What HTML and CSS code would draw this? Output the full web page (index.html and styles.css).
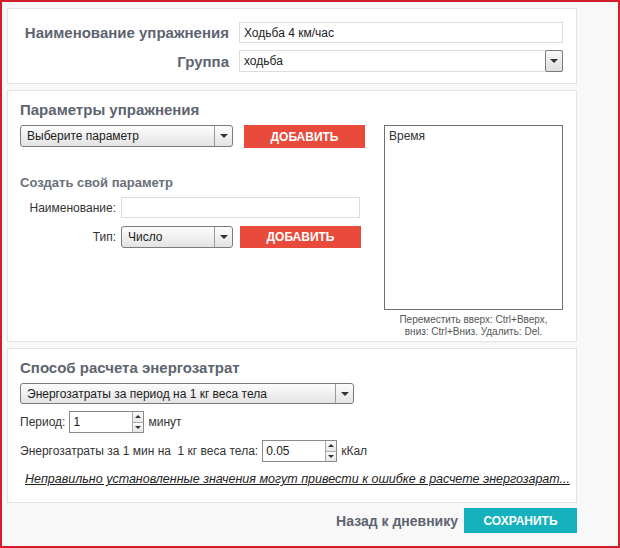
FILE: index.html
```html
<!DOCTYPE html>
<html lang="ru">
<head>
    <meta charset="UTF-8">
    <title>Упражнение</title>
    <link rel="stylesheet" href="styles.css">
</head>
<body>
<div class="frame">
    <div class="panel panel-main">
        <div class="main-row">
            <label class="big-label">Наименование упражнения</label>
            <input class="text-input" type="text" value="Ходьба 4 км/час">
        </div>
        <div class="main-row">
            <label class="big-label">Группа</label>
            <div class="flat-select">
                <span>ходьба</span>
                <span class="flat-arrow"><i class="tri"></i></span>
            </div>
        </div>
    </div>

    <div class="panel panel-params">
        <h2 class="panel-title">Параметры упражнения</h2>
        <div class="params-body">
            <div class="params-left">
                <div class="pick-row">
                    <div class="select select-param">
                        <span>Выберите параметр</span>
                        <span class="arrow"><i class="tri"></i></span>
                    </div>
                    <button class="btn btn-red">ДОБАВИТЬ</button>
                </div>

                <h3 class="sub-title">Создать свой параметр</h3>
                <div class="own-row">
                    <label class="small-label">Наименование:</label>
                    <input class="text-input own-name" type="text">
                </div>
                <div class="own-row">
                    <label class="small-label">Тип:</label>
                    <div class="select select-type">
                        <span>Число</span>
                        <span class="arrow"><i class="tri"></i></span>
                    </div>
                    <button class="btn btn-red btn-type">ДОБАВИТЬ</button>
                </div>
            </div>
            <div class="params-right">
                <div class="listbox">
                    <div class="list-item">Время</div>
                </div>
                <p class="hint">Переместить вверх: Ctrl+Вверх,<br>вниз: Ctrl+Вниз. Удалить: Del.</p>
            </div>
        </div>
    </div>

    <div class="panel panel-energy">
        <h2 class="panel-title">Способ расчета энергозатрат</h2>
        <div class="select select-method">
            <span>Энергозатраты за период на 1 кг веса тела</span>
            <span class="arrow"><i class="tri"></i></span>
        </div>
        <div class="spin-row">
            <span>Период:</span>
            <div class="spin">
                <input type="text" value="1">
                <span class="spin-btns"><i class="up"></i><i class="down"></i></span>
            </div>
            <span>минут</span>
        </div>
        <div class="spin-row">
            <span>Энергозатраты за 1 мин на&nbsp; 1 кг веса тела:</span>
            <div class="spin">
                <input type="text" value="0.05">
                <span class="spin-btns"><i class="up"></i><i class="down"></i></span>
            </div>
            <span>кКал</span>
        </div>
        <a class="warn-link" href="#">Неправильно установленные значения могут привести к ошибке в расчете энергозарат...</a>
    </div>

    <div class="footer">
        <a class="back-link" href="#">Назад к дневнику</a>
        <button class="btn btn-teal">СОХРАНИТЬ</button>
    </div>
</div>
</body>
</html>
```

FILE: styles.css
```css
html, body {
    margin: 0;
    padding: 0;
}
body {
    font-family: "Liberation Sans", Arial, sans-serif;
    font-size: 12px;
    color: #333;
}
.frame {
    width: 620px;
    height: 548px;
    box-sizing: border-box;
    border: 2px solid #d21f2b;
    background: #f8f8f8;
    padding: 6px 0 0 5px;
}
.panel {
    width: 570px;
    box-sizing: border-box;
    background: #fff;
    border: 1px solid #e3e3e3;
    margin-bottom: 6px;
}
.panel-main {
    padding: 13px 13px 11px 13px;
}
.main-row {
    display: grid;
    grid-template-columns: 208px 324px;
    column-gap: 10px;
    align-items: center;
}
.main-row + .main-row {
    margin-top: 7px;
}
.big-label {
    text-align: right;
    font-weight: bold;
    font-size: 15px;
    color: #5d646f;
}
.text-input {
    height: 21px;
    box-sizing: border-box;
    border: 1px solid #dcdcdc;
    padding: 0 4px;
    font-family: inherit;
    font-size: 12px;
    color: #222;
    outline: none;
}
.flat-select {
    height: 22px;
    box-sizing: border-box;
    border: 1px solid #dcdcdc;
    display: flex;
    align-items: center;
    justify-content: space-between;
    padding-left: 4px;
    color: #222;
}
.flat-arrow {
    width: 18px;
    height: 22px;
    box-sizing: border-box;
    margin-right: -1px;
    border: 1px solid #7b7b7b;
    border-radius: 2px;
    background: linear-gradient(#fafafa, #dedede);
    display: flex;
    align-items: center;
    justify-content: center;
}
.tri {
    width: 0;
    height: 0;
    border-left: 4px solid transparent;
    border-right: 4px solid transparent;
    border-top: 4px solid #333;
}
.panel-title {
    margin: 0 0 6px 0;
    font-size: 15px;
    line-height: 18px;
    color: #5d646f;
}
.panel-params {
    height: 252px;
    padding: 10px 12px 0 12px;
}
.params-body {
    display: flex;
    gap: 19px;
}
.params-left {
    width: 345px;
}
.pick-row {
    display: flex;
    gap: 11px;
}
.select {
    height: 22px;
    box-sizing: border-box;
    border: 1px solid #7b7b7b;
    border-radius: 3px;
    background: linear-gradient(#fdfdfd, #e3e3e3);
    display: flex;
    align-items: center;
    justify-content: space-between;
    padding-left: 6px;
    color: #222;
}
.select .arrow {
    width: 17px;
    height: 100%;
    border-left: 1px solid #9a9a9a;
    display: flex;
    align-items: center;
    justify-content: center;
}
.select-param {
    width: 213px;
}
.btn {
    border: none;
    color: #fff;
    font-family: inherit;
    font-weight: bold;
    font-size: 12px;
    cursor: pointer;
}
.btn-red {
    width: 121px;
    height: 23px;
    background: #e84b3c;
}
.sub-title {
    margin: 26px 0 5px 0;
    font-size: 13px;
    line-height: 18px;
    color: #6a707a;
}
.own-row {
    display: flex;
    align-items: center;
    gap: 5px;
}
.own-row + .own-row {
    margin-top: 8px;
}
.small-label {
    width: 96px;
    text-align: right;
    color: #333;
}
.own-name {
    width: 239px;
}
.select-type {
    width: 112px;
}
.btn-type {
    margin-left: 2px;
    height: 22px;
}
.params-right {
    width: 179px;
}
.listbox {
    height: 185px;
    box-sizing: border-box;
    border: 1px solid #707070;
    padding: 3px 4px;
}
.hint {
    margin: 4px 0 0 0;
    font-size: 10px;
    line-height: 12px;
    color: #555;
    text-align: center;
}
.panel-energy {
    height: 155px;
    padding: 10px 12px 0 12px;
}
.select-method {
    width: 334px;
    height: 21px;
}
.spin-row {
    display: flex;
    align-items: center;
    gap: 4px;
    margin-top: 7px;
}
.spin {
    display: flex;
    width: 75px;
    height: 22px;
    box-sizing: border-box;
    border: 1px solid #8a8a8a;
}
.spin input {
    width: 56px;
    border: none;
    padding: 0 3px;
    font-family: inherit;
    font-size: 12px;
    color: #222;
    outline: none;
}
.spin-btns {
    width: 18px;
    border-left: 1px solid #aaa;
    display: flex;
    flex-direction: column;
}
.spin-btns i {
    flex: 1;
    display: flex;
    align-items: center;
    justify-content: center;
    background: linear-gradient(#fbfbfb, #e6e6e6);
}
.spin-btns .up {
    border-bottom: 1px solid #aaa;
}
.spin-btns .up::after {
    content: "";
    border-left: 3px solid transparent;
    border-right: 3px solid transparent;
    border-bottom: 3px solid #333;
}
.spin-btns .down::after {
    content: "";
    border-left: 3px solid transparent;
    border-right: 3px solid transparent;
    border-top: 3px solid #333;
}
.warn-link {
    display: block;
    margin: 10px -6px 0 0;
    text-align: right;
    font-style: italic;
    font-size: 12.5px;
    color: #222;
    text-decoration: underline;
}
.footer {
    width: 570px;
    display: flex;
    justify-content: flex-end;
    align-items: center;
    gap: 6px;
    margin-top: -1px;
}
.back-link {
    font-weight: bold;
    font-size: 14px;
    color: #5d646f;
    text-decoration: none;
}
.btn-teal {
    width: 113px;
    height: 25px;
    background: #15b2bd;
}
```
